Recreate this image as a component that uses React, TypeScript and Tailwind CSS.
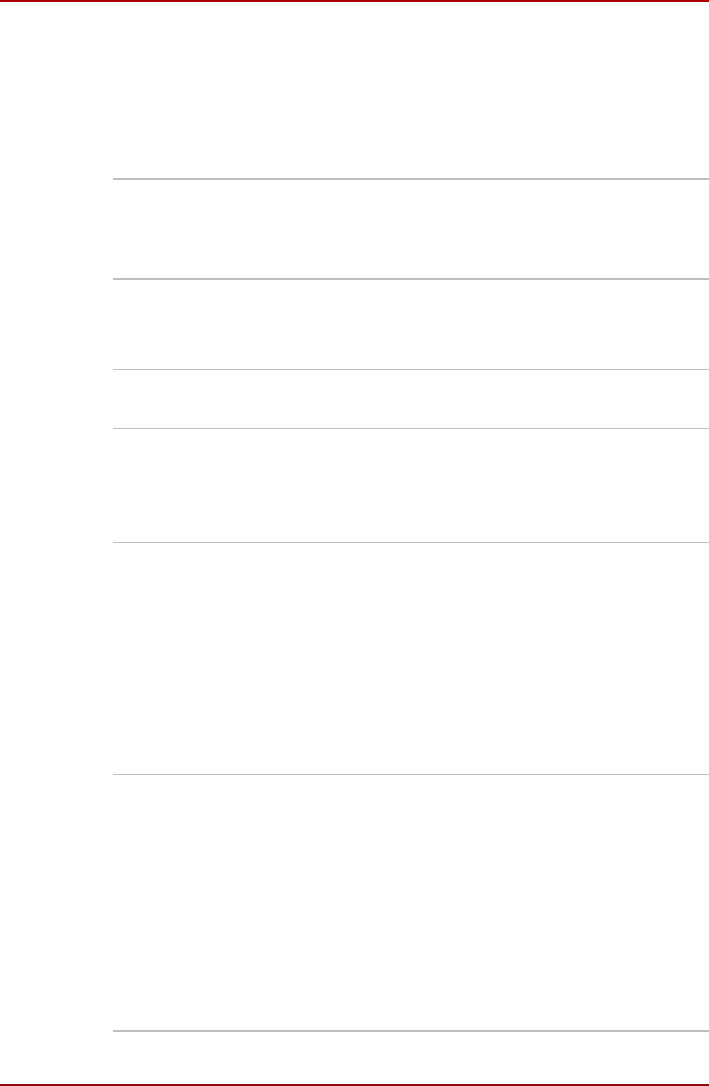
import React from 'react';

// row heights measured from the top border of each row to the next one
const rows = [
  { h: 'h-[100px]', thick: true },
  { h: 'h-[91px]', thick: true },
  { h: 'h-[59px]', thick: false },
  { h: 'h-[114px]', thick: false },
  { h: 'h-[232px]', thick: false },
  { h: 'h-[256px]', thick: false },
];

export default function App() {
  return (
    <div className="flex h-[1086px] w-full flex-col border-t-2 border-b-2 border-t-[#a80000] border-b-[#8c0a0a] bg-white font-['Liberation_Sans',sans-serif]">
      <div className="h-[176px]" />
      <div className="ml-[113px] flex flex-1 flex-col">
        {rows.map((r, i) => (
          <div
            key={i}
            className={`${r.h} ${r.thick ? 'border-t-2' : 'border-t'} border-[#bfbfbf]`}
          />
        ))}
        <div className="border-t-2 border-[#bfbfbf]" />
      </div>
    </div>
  );
}
